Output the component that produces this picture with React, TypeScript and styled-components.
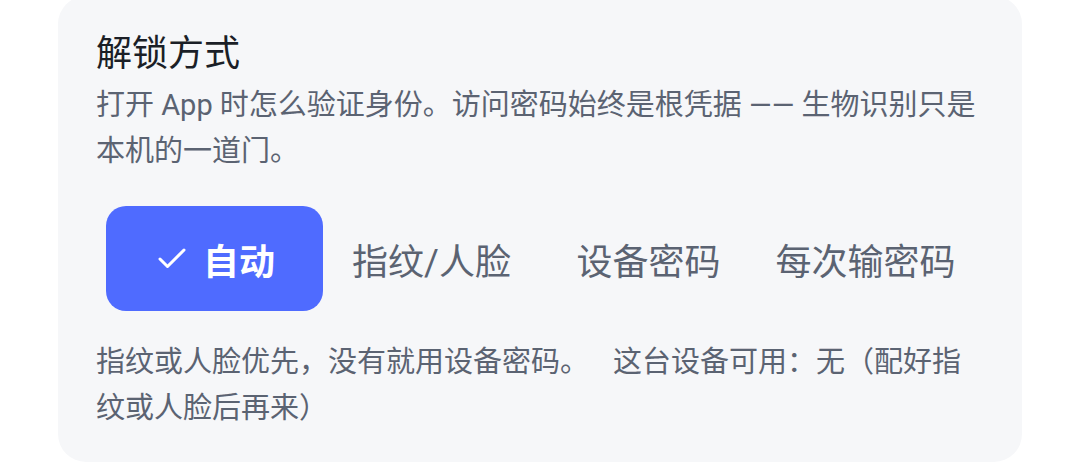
import { useState } from "react";
import styled, { createGlobalStyle } from "styled-components";
import { Check } from "lucide-react";

const GlobalStyle = createGlobalStyle`
  html, body {
    margin: 0;
    padding: 0;
    background: #ffffff;
  }
  body {
    font-family: Roboto, "Noto Sans CJK SC", sans-serif;
    -webkit-font-smoothing: antialiased;
  }
`;

const options = ["自动", "指纹/人脸", "设备密码", "每次输密码"];

function App() {
  const [mode, setMode] = useState(0);

  return (
    <>
      <GlobalStyle />
      <StPage>
        <StCard>
          <StTitle>解锁方式</StTitle>
          <StDesc>
            打开 App 时怎么验证身份。访问密码始终是根凭据 —— 生物识别只是本机的一道门。
          </StDesc>
          <StSegment>
            {options.map((label, i) => (
              <StOption
                key={label}
                $active={mode === i}
                onClick={() => setMode(i)}
              >
                {mode === i && <Check size={36} strokeWidth={2} />}
                {label}
              </StOption>
            ))}
          </StSegment>
          <StHint>
            指纹或人脸优先，没有就用设备密码。
            <StStatus>这台设备可用：无（配好指纹或人脸后再来）</StStatus>
          </StHint>
        </StCard>
      </StPage>
    </>
  );
}

export default App;

const StPage = styled.div`
  padding: 0 58px;
`;

const StCard = styled.div`
  margin-top: -4px;
  background-color: #f6f7f9;
  border-radius: 28px;
  padding: 35px 38px 31px;
  display: flex;
  flex-direction: column;
`;

const StTitle = styled.div`
  font-size: 36px;
  line-height: 47px;
  font-weight: 400;
  color: #1b1f27;
  margin-bottom: 4px;
`;

const StDesc = styled.div`
  font-size: 29px;
  line-height: 46px;
  font-weight: 400;
  color: #5b6372;
`;

const StSegment = styled.div`
  display: grid;
  grid-template-columns: repeat(4, 1fr);
  padding: 10px;
  margin-top: 22px;
`;

const StOption = styled.button<{ $active: boolean }>`
  display: flex;
  align-items: center;
  justify-content: center;
  gap: 13px;
  height: 105px;
  border: 0;
  border-radius: 20px;
  padding: 0;
  font-family: inherit;
  font-size: 36px;
  font-weight: ${(props) => (props.$active ? 700 : 400)};
  color: ${(props) => (props.$active ? "#ffffff" : "#5b6372")};
  background-color: ${(props) => (props.$active ? "#4f6bff" : "transparent")};
  cursor: pointer;
  white-space: nowrap;

  svg {
    flex: none;
  }
`;

const StHint = styled.div`
  margin-top: 18px;
  font-size: 29px;
  line-height: 46px;
  font-weight: 400;
  color: #5b6372;
`;

const StStatus = styled.span`
  margin-left: 24px;
`;
